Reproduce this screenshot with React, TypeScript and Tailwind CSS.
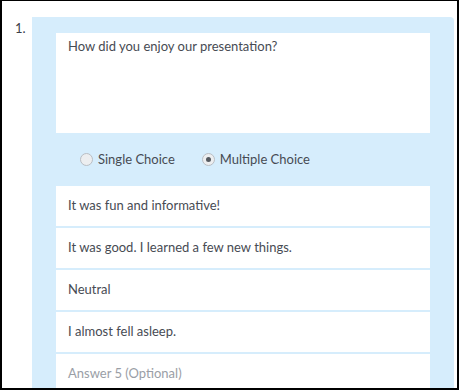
const answers = [
  "It was fun and informative!",
  "It was good. I learned a few new things.",
  "Neutral",
  "I almost fell asleep.",
]

function Radio({ label, checked }: { label: string; checked?: boolean }) {
  return (
    <label className="flex items-center gap-[5px]">
      <span className="flex items-center justify-center w-[13px] h-[13px] rounded-full border border-[#b9bec4] bg-[#eceef0]">
        {checked && <span className="w-[5px] h-[5px] rounded-full bg-[#555a60]"></span>}
      </span>
      <span className="text-[13px] text-[#474b53]">{label}</span>
    </label>
  )
}

export default function App() {
  return (
    <div
      className="w-[459px] h-[390px] overflow-hidden bg-white border-t border-l-2 border-r-2 border-b-2 border-black"
      style={{ fontFamily: "Lato, 'Noto Sans', sans-serif" }}
    >
      <div className="flex pt-4">
        <div className="w-[30px] pl-[13px] pt-[1px] text-[13px] leading-5 text-[#3c4049]">1.</div>
        <div className="w-[422px] bg-[#d6edfc] rounded-tr-[4px] px-6 pt-4 pb-6">
          <div className="h-[100px] bg-white px-3 pt-[3px] text-[13px] leading-5 text-[#474b53]">
            How did you enjoy our presentation?
          </div>
          <div className="h-[53px] flex items-center gap-[27px] pl-6">
            <Radio label="Single Choice" />
            <Radio label="Multiple Choice" checked />
          </div>
          <div className="flex flex-col gap-[2px]">
            {answers.map((a) => (
              <div key={a} className="h-10 bg-white flex items-center px-3 text-[13px] text-[#474b53]">
                {a}
              </div>
            ))}
            <div className="h-10 bg-white flex items-center px-3 text-[13px] text-[#9a9ea6]">
              Answer 5 (Optional)
            </div>
          </div>
        </div>
      </div>
    </div>
  )
}
